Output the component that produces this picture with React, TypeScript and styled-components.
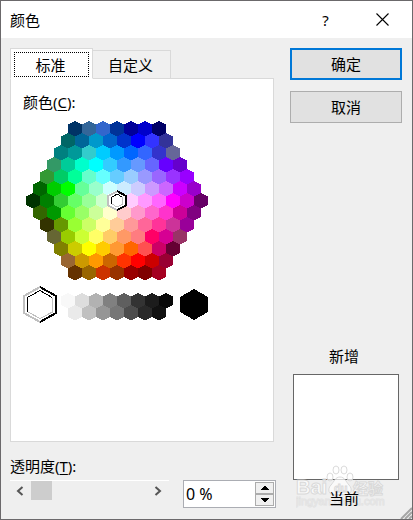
import React, { useState } from 'react';
import styled, { createGlobalStyle } from 'styled-components';

const COLOR_ROWS = [
  '003366 336699 3366CC 003399 000099 0000CC 000066',
  '006666 006699 0099CC 0066CC 0033CC 0000FF 3333FF 333399',
  '008080 009999 33CCCC 00CCFF 0099FF 0066FF 3366FF 3333CC 666699',
  '339966 00CC99 00FFCC 00FFFF 33CCFF 3399FF 6699FF 6666FF 6600FF 6600CC',
  '339933 00CC66 00FF99 66FFCC 66FFFF 66CCFF 99CCFF 9999FF 9966FF 9933FF 9900FF',
  '006600 00CC00 00FF00 66FF99 99FFCC CCFFFF CCECFF CCCCFF CC99FF CC66FF CC00FF 9900CC',
  '003300 008000 33CC33 66FF66 99FF99 CCFFCC FFFFFF FFCCFF FF99FF FF66FF FF00FF CC00CC 660066',
  '336600 009900 66FF33 99FF66 CCFF99 FFFFCC FFCCCC FF99CC FF66CC FF33CC CC0099 800080',
  '333300 669900 99FF33 CCFF66 FFFF99 FFCC99 FF9999 FF6699 FF3399 CC3399 990099',
  '666633 99CC00 CCFF33 FFFF66 FFCC66 FF9966 FF7C80 FF0066 D60093 993366',
  '808000 CCCC00 FFFF00 FFCC00 FF9933 FF6600 FF5050 CC0066 660033',
  '996633 CC9900 FF9900 CC6600 FF3300 FF0000 CC0000 990033',
  '663300 996600 CC3300 993300 990000 800000 A50021',
].map((row) => row.split(' '));

const GRAY_ROWS = [
  'F8F8F8 DDDDDD B2B2B2 808080 5F5F5F 333333 1C1C1C 080808',
  'EAEAEA C0C0C0 969696 777777 4D4D4D 292929 111111',
].map((row) => row.split(' '));

const GlobalStyle = createGlobalStyle`
  * { box-sizing: border-box; }
  body {
    margin: 0;
    background: #efefef;
    color: #000;
    font: 15px/20px "Noto Sans", "Noto Sans CJK SC", sans-serif;
  }
  button, input { font: inherit; color: inherit; margin: 0; }
`;

const Dialog = styled.main`
  position: relative;
  display: flex;
  flex-direction: column;
  min-height: 100vh;
  border: 1px solid #6b696b;
  background: #efefef;
  overflow: hidden;
`;

const TitleBar = styled.header`
  display: flex;
  align-items: center;
  height: 37px;
  padding: 0 1px 0 9px;
  background: #fff;
`;

const Title = styled.h1`
  flex: 1;
  margin: 0;
  font: inherit;
`;

const CaptionButton = styled.button`
  display: grid;
  place-items: center;
  width: 57px;
  height: 37px;
  padding: 0;
  border: 0;
  background: none;
`;

const Body = styled.div`
  flex: 1;
  display: flex;
  gap: 14px;
  padding: 10px 10px 11px 9px;
`;

const LeftColumn = styled.div`
  flex: 1;
  display: flex;
  flex-direction: column;
`;

const RightColumn = styled.div`
  display: flex;
  flex-direction: column;
  width: 112px;
`;

const Tabs = styled.div`
  display: flex;
  align-items: flex-end;
`;

const Tab = styled.button<{ $active?: boolean }>`
  position: relative;
  width: ${(p) => (p.$active ? 83 : 78)}px;
  height: ${(p) => (p.$active ? 31 : 29)}px;
  margin-bottom: -1px;
  padding: ${(p) => (p.$active ? '3px' : '3px 5px 3px 3px')};
  border: 1px solid #d9d9d9;
  border-left-width: ${(p) => (p.$active ? 1 : 0)}px;
  border-bottom-color: ${(p) => (p.$active ? '#fff' : '#d9d9d9')};
  background: ${(p) => (p.$active ? '#fff' : '#f0f0f0')};
`;

const FocusFrame = styled.span`
  display: grid;
  place-items: center;
  height: 25px;
  padding-right: 2px;
  border: 1px dotted #000;
`;

const Panel = styled.section`
  flex: 1;
  display: flex;
  flex-direction: column;
  align-items: flex-start;
  margin-right: 2px;
  padding: 13px 12px;
  border: 1px solid #d9d9d9;
  background: #fff;
`;

const Label = styled.label`
  display: block;
  u { text-underline-offset: 2px; }
`;

const Palette = styled.div`
  position: relative;
  margin: 9px 3px 6px;
  padding-bottom: 3px;
`;

const HexRow = styled.div<{ $start?: boolean }>`
  display: flex;
  justify-content: ${(p) => (p.$start ? 'flex-start' : 'center')};
  height: 12px;
  padding-left: ${(p) => (p.$start ? 7 : 0)}px;
`;

/* The edge steps in whole pixels so that neighbouring cells interlock without seams. */
const Hex = styled.input<{ $color: string }>`
  appearance: none;
  flex: none;
  width: 14px;
  height: 15px;
  background: ${(p) => p.$color};
  clip-path: polygon(
    6px 0, 8px 0, 8px 1px, 10px 1px, 10px 2px, 12px 2px, 12px 3px, 14px 3px,
    14px 12px, 13px 12px, 13px 13px, 11px 13px, 11px 14px, 9px 14px, 9px 15px,
    5px 15px, 5px 14px, 3px 14px, 3px 13px, 1px 13px, 1px 12px, 0 12px,
    0 3px, 2px 3px, 2px 2px, 4px 2px, 4px 1px, 6px 1px
  );
`;

const Marker = styled.svg`
  position: absolute;
  left: 81px;
  top: 69px;
  pointer-events: none;
`;

const Neutrals = styled.div`
  display: flex;
  align-items: center;
`;

const SwatchButton = styled.button`
  display: block;
  padding: 0;
  border: 0;
  background: none;
  svg { display: block; }
`;

const GrayCells = styled.div`
  margin: 4px 7px 0 4px;
  padding-bottom: 3px;
`;

const TransparencyLabel = styled(Label)`
  margin-top: 14px;
`;

const TransparencyRow = styled.div`
  display: flex;
  align-items: flex-start;
  gap: 14px;
  margin-top: 4px;
`;

const ScrollBar = styled.div`
  flex: 1;
  display: flex;
  height: 21px;
  border-top: 1px solid #fff;
`;

const ArrowButton = styled.button`
  display: grid;
  place-items: center;
  flex: none;
  width: 21px;
  padding: 0 2px 0 0;
  border: 0;
  background: none;
`;

const Slider = styled.input`
  appearance: none;
  flex: 1;
  width: 0;
  min-width: 0;
  height: 19px;
  background: none;
  &::-webkit-slider-thumb {
    appearance: none;
    width: 21px;
    height: 19px;
    background: #cdcdcd;
  }
`;

const Spinner = styled.div`
  display: flex;
  width: 93px;
  height: 28px;
  padding: 1px;
  border: 1px solid #abadb3;
  background: #fff;
`;

const SpinnerInput = styled.input`
  flex: 1;
  min-width: 0;
  padding: 0 1px;
  border: 0;
  outline: 0;
  background: none;
  font-size: 16px;
`;

const SpinnerButtons = styled.div`
  display: flex;
  flex-direction: column;
  width: 19px;
`;

const StepButton = styled.button`
  flex: 1;
  display: grid;
  place-items: center;
  padding: 0;
  border: 1px solid #acacac;
  background: #f0f0f0;
`;

const DialogButton = styled.button<{ $primary?: boolean }>`
  height: 32px;
  margin-bottom: 11px;
  padding: 0;
  border: ${(p) => (p.$primary ? '2px solid #0078d7' : '1px solid #adadad')};
  background: #e1e1e1;
`;

const Preview = styled.figure`
  position: relative;
  display: flex;
  flex-direction: column;
  align-items: center;
  margin: auto 0 0;
  padding: 0 3px;
`;

const PreviewCaption = styled.span`
  position: relative;
  z-index: 1;
  padding-right: 4px;
`;

const PreviewBox = styled.div`
  width: 100%;
  aspect-ratio: 1;
  margin: 8px 0;
  border: 1px solid #666;
  background: #fff;
`;

const Watermark = styled.svg`
  position: absolute;
  left: 6px;
  bottom: -3px;
  pointer-events: none;
`;

const Grip = styled.svg`
  position: absolute;
  right: 0;
  bottom: 0;
`;

const Arrow = ({ left }: { left?: boolean }) => (
  <svg width="8" height="10" viewBox="0 0 8 10" aria-hidden="true">
    <path d={left ? 'M6.5 1 2 5l4.500 4' : 'M1.500 1 6 5 1.500 9'} fill="none" stroke="#555" strokeWidth="2" />
  </svg>
);

const Triangle = ({ up }: { up?: boolean }) => (
  <svg width="8" height="4" viewBox="0 0 8 4" aria-hidden="true" shapeRendering="crispEdges">
    <path d={up ? 'M3 0h2v1h1v1h1v1h1v1H0V3h1V2h1V1h1z' : 'M3 4h2V3h1V2h1V1h1V0H0v1h1v1h1v1h1z'} />
  </svg>
);

export default function App() {
  const [selected, setSelected] = useState('#FFFFFF');
  const [transparency, setTransparency] = useState(0);
  const step = (by: number) => setTransparency((v) => Math.max(0, Math.min(100, v + by)));

  const renderHex = (code: string) => {
    const color = `#${code}`;
    return (
      <Hex
        key={code}
        type="radio"
        name="color"
        aria-label={color}
        $color={color}
        checked={selected === color}
        onChange={() => setSelected(color)}
      />
    );
  };

  return (
    <>
      <GlobalStyle />
      <Dialog>
        <TitleBar>
          <Title>颜色</Title>
          <CaptionButton aria-label="帮助">?</CaptionButton>
          <CaptionButton aria-label="关闭">
            <svg width="13" height="13" viewBox="0 0 13 13">
              <path d="M.5.5l12 12M12.500.5l-12 12" stroke="#000" strokeWidth="1.100" />
            </svg>
          </CaptionButton>
        </TitleBar>
        <Body>
          <LeftColumn>
            <Tabs role="tablist">
              <Tab role="tab" aria-selected="true" $active>
                <FocusFrame>标准</FocusFrame>
              </Tab>
              <Tab role="tab" aria-selected="false">自定义</Tab>
            </Tabs>
            <Panel>
              <Label as="div" id="color-label">颜色(<u>C</u>):</Label>
              <Palette role="radiogroup" aria-labelledby="color-label">
                {COLOR_ROWS.map((row) => (
                  <HexRow key={row[0]}>{row.map(renderHex)}</HexRow>
                ))}
                {selected === '#FFFFFF' && (
                  <Marker width="20" height="21" viewBox="0 0 20 21" shapeRendering="crispEdges" aria-hidden="true">
                    <path d="M10 0 20 5v11l-10 5L0 16V5z" fill="#fff" />
                    <path d="M11 1 1 6v9.500L10 20" fill="none" stroke="#c0c0c0" strokeWidth="2" />
                    <path d="M10 1l9 5v9.500L10 20" fill="none" stroke="#000" strokeWidth="2" />
                    <path d="M4.500 14V7.500L10 4l5 3" fill="none" stroke="#000" />
                    <path d="M15.500 7v7L10 17l-5-3" fill="none" stroke="#c0c0c0" />
                  </Marker>
                )}
              </Palette>
              <Neutrals>
                <SwatchButton aria-label="白色" onClick={() => setSelected('#FFFFFF')}>
                  <svg width="34" height="37" viewBox="0 0 34 37" shapeRendering="crispEdges">
                    <path d="M17 1 1 10v17l16 9" fill="none" stroke="#c0c0c0" strokeWidth="2" />
                    <path d="M17 1l16 9v17l-16 9" fill="none" stroke="#000" strokeWidth="2" />
                    <path d="M4.500 26V11.500L17 4.500l12 7" fill="none" stroke="#000" />
                    <path d="M29.500 12v14L17 32.500 5 26" fill="none" stroke="#c0c0c0" />
                  </svg>
                </SwatchButton>
                <GrayCells role="radiogroup" aria-label="灰色">
                  {GRAY_ROWS.map((row, i) => (
                    <HexRow key={row[0]} $start={i === 1}>{row.map(renderHex)}</HexRow>
                  ))}
                </GrayCells>
                <SwatchButton aria-label="黑色" onClick={() => setSelected('#000000')}>
                  <svg width="28" height="31" viewBox="0 0 28 31" shapeRendering="crispEdges">
                    <path d="M14 0l14 8v15l-14 8L0 23V8z" />
                  </svg>
                </SwatchButton>
              </Neutrals>
            </Panel>
            <TransparencyLabel htmlFor="transparency">透明度(<u>T</u>):</TransparencyLabel>
            <TransparencyRow>
              <ScrollBar>
                <ArrowButton aria-label="减少" onClick={() => step(-1)}><Arrow left /></ArrowButton>
                <Slider
                  type="range"
                  aria-label="透明度"
                  value={transparency}
                  onChange={(e) => setTransparency(Number(e.target.value))}
                />
                <ArrowButton aria-label="增加" onClick={() => step(1)}><Arrow /></ArrowButton>
              </ScrollBar>
              <Spinner>
                <SpinnerInput
                  id="transparency"
                  value={`${transparency} %`}
                  onChange={(e) => setTransparency(Math.min(100, parseInt(e.target.value, 10) || 0))}
                />
                <SpinnerButtons>
                  <StepButton aria-label="增加 1" onClick={() => step(1)}><Triangle up /></StepButton>
                  <StepButton aria-label="减少 1" onClick={() => step(-1)}><Triangle /></StepButton>
                </SpinnerButtons>
              </Spinner>
            </TransparencyRow>
          </LeftColumn>
          <RightColumn>
            <DialogButton $primary>确定</DialogButton>
            <DialogButton>取消</DialogButton>
            <Preview>
              <PreviewCaption>新增</PreviewCaption>
              <PreviewBox />
              <PreviewCaption>当前</PreviewCaption>
              <Watermark width="96" height="46" viewBox="0 0 96 46" aria-hidden="true">
                <g fill="#fff" fillOpacity=".7" stroke="#d2d2d2" strokeOpacity=".8" strokeWidth="1" fontFamily='"Liberation Sans", "Noto Sans CJK SC", sans-serif'>
                  <text x="0" y="29" fontSize="20" fontWeight="700">Bai</text>
                  <ellipse cx="34" cy="12" rx="3" ry="4" />
                  <ellipse cx="40" cy="5" rx="3" ry="4" />
                  <ellipse cx="48" cy="5" rx="3" ry="4" />
                  <ellipse cx="54" cy="12" rx="3" ry="4" />
                  <path d="M44 12c-5 0-6 5-9 8-4 4-2 10 3 10 3 0 9-1 12 0 5 0 7-6 3-10-3-3-4-8-9-8z" />
                  <text x="38" y="27" fontSize="11" fontWeight="700">du</text>
                  <text x="57" y="29" fontSize="15" fontWeight="700">经验</text>
                  <text x="0" y="40" fontSize="11" strokeOpacity=".5" strokeWidth="1">jingyan.baidu.com</text>
                </g>
              </Watermark>
            </Preview>
          </RightColumn>
        </Body>
        <Grip width="12" height="12" viewBox="0 0 12 12" aria-hidden="true">
          <path d="M1 12 12 1M5 12l7-7M9 12l3-3" stroke="#a5a5a5" strokeWidth="2" />
        </Grip>
      </Dialog>
    </>
  );
}
